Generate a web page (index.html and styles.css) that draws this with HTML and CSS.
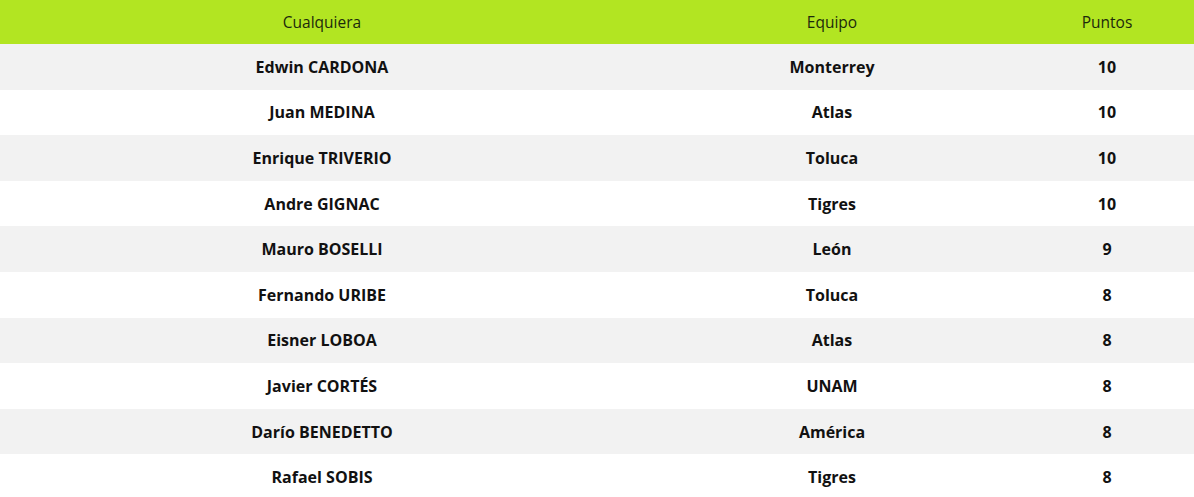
FILE: index.html
```html
<!DOCTYPE html>
<html lang="es">
<head>
<meta charset="utf-8">
<link rel="stylesheet" href="styles.css">
</head>
<body>
<table class="scorers">
  <thead>
    <tr><th class="c1">Cualquiera</th><th class="c2">Equipo</th><th class="c3">Puntos</th></tr>
  </thead>
  <tbody>
    <tr><td>Edwin CARDONA</td><td>Monterrey</td><td>10</td></tr>
    <tr><td>Juan MEDINA</td><td>Atlas</td><td>10</td></tr>
    <tr><td>Enrique TRIVERIO</td><td>Toluca</td><td>10</td></tr>
    <tr><td>Andre GIGNAC</td><td>Tigres</td><td>10</td></tr>
    <tr><td>Mauro BOSELLI</td><td>León</td><td>9</td></tr>
    <tr><td>Fernando URIBE</td><td>Toluca</td><td>8</td></tr>
    <tr><td>Eisner LOBOA</td><td>Atlas</td><td>8</td></tr>
    <tr><td>Javier CORTÉS</td><td>UNAM</td><td>8</td></tr>
    <tr><td>Darío BENEDETTO</td><td>América</td><td>8</td></tr>
    <tr><td>Rafael SOBIS</td><td>Tigres</td><td>8</td></tr>
  </tbody>
</table>
</body>
</html>
```
FILE: styles.css
```css
html, body {
  margin: 0;
  padding: 0;
  background: #ffffff;
}
body {
  font-family: "Open Sans", "Liberation Sans", sans-serif;
  color: #111111;
}
.scorers {
  width: 1194px;
  border-collapse: collapse;
  table-layout: fixed;
}
.scorers th {
  background: #b2e522;
  color: #1c2a0c;
  font-weight: 400;
  font-size: 15.5px;
  height: 44px;
  padding: 0;
  text-align: center;
}
.scorers .c1 { width: 644px; }
.scorers .c2 { width: 376px; }
.scorers .c3 { width: 174px; }
.scorers td {
  height: 45.6px;
  padding: 0;
  text-align: center;
  font-weight: 700;
  font-size: 16px;
  color: #111111;
}
.scorers tbody tr:nth-child(odd) td {
  background: #f2f2f2;
}
```
